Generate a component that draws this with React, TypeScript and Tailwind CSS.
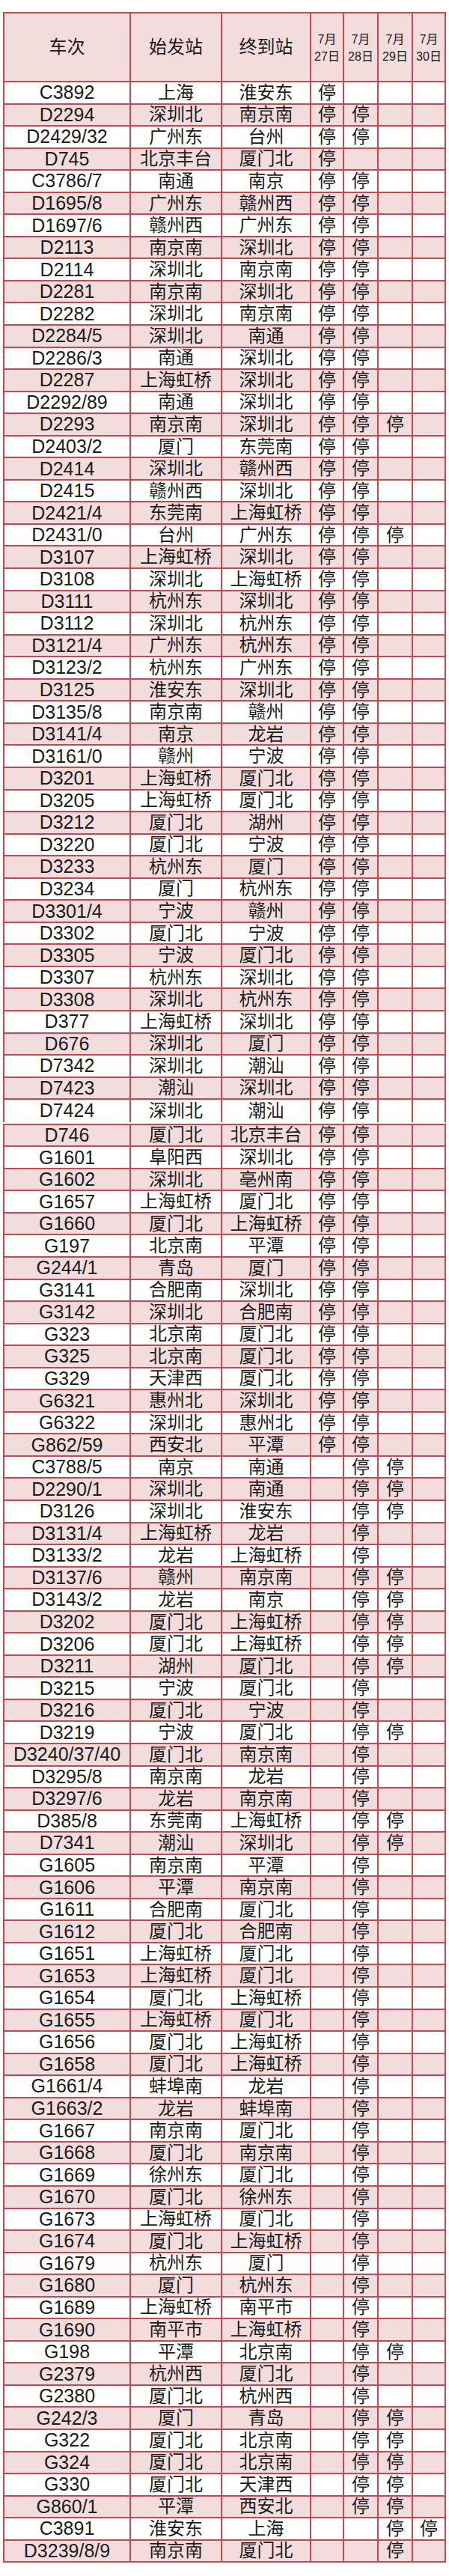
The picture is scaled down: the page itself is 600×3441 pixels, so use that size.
import React from 'react';

// train | from | to | stops on 7/27, 7/28, 7/29, 7/30
const partOne = [
  'C3892|上海|淮安东|1000',
  'D2294|深圳北|南京南|1100',
  'D2429/32|广州东|台州|1100',
  'D745|北京丰台|厦门北|1000',
  'C3786/7|南通|南京|1100',
  'D1695/8|广州东|赣州西|1100',
  'D1697/6|赣州西|广州东|1100',
  'D2113|南京南|深圳北|1100',
  'D2114|深圳北|南京南|1100',
  'D2281|南京南|深圳北|1100',
  'D2282|深圳北|南京南|1100',
  'D2284/5|深圳北|南通|1100',
  'D2286/3|南通|深圳北|1100',
  'D2287|上海虹桥|深圳北|1100',
  'D2292/89|南通|深圳北|1100',
  'D2293|南京南|深圳北|1110',
  'D2403/2|厦门|东莞南|1100',
  'D2414|深圳北|赣州西|1100',
  'D2415|赣州西|深圳北|1100',
  'D2421/4|东莞南|上海虹桥|1100',
  'D2431/0|台州|广州东|1110',
  'D3107|上海虹桥|深圳北|1100',
  'D3108|深圳北|上海虹桥|1100',
  'D3111|杭州东|深圳北|1100',
  'D3112|深圳北|杭州东|1100',
  'D3121/4|广州东|杭州东|1100',
  'D3123/2|杭州东|广州东|1100',
  'D3125|淮安东|深圳北|1100',
  'D3135/8|南京南|赣州|1100',
  'D3141/4|南京|龙岩|1100',
  'D3161/0|赣州|宁波|1100',
  'D3201|上海虹桥|厦门北|1100',
  'D3205|上海虹桥|厦门北|1100',
  'D3212|厦门北|湖州|1100',
  'D3220|厦门北|宁波|1100',
  'D3233|杭州东|厦门|1100',
  'D3234|厦门|杭州东|1100',
  'D3301/4|宁波|赣州|1100',
  'D3302|厦门北|宁波|1100',
  'D3305|宁波|厦门北|1100',
  'D3307|杭州东|深圳北|1100',
  'D3308|深圳北|杭州东|1100',
  'D377|上海虹桥|深圳北|1100',
  'D676|深圳北|厦门|1100',
  'D7342|深圳北|潮汕|1100',
  'D7423|潮汕|深圳北|1100',
  'D7424|深圳北|潮汕|1100',
];

const partTwo = [
  'D746|厦门北|北京丰台|1100',
  'G1601|阜阳西|深圳北|1100',
  'G1602|深圳北|亳州南|1100',
  'G1657|上海虹桥|厦门北|1100',
  'G1660|厦门北|上海虹桥|1100',
  'G197|北京南|平潭|1100',
  'G244/1|青岛|厦门|1100',
  'G3141|合肥南|深圳北|1100',
  'G3142|深圳北|合肥南|1100',
  'G323|北京南|厦门北|1100',
  'G325|北京南|厦门北|1100',
  'G329|天津西|厦门北|1100',
  'G6321|惠州北|深圳北|1100',
  'G6322|深圳北|惠州北|1100',
  'G862/59|西安北|平潭|1100',
  'C3788/5|南京|南通|0110',
  'D2290/1|深圳北|南通|0110',
  'D3126|深圳北|淮安东|0110',
  'D3131/4|上海虹桥|龙岩|0100',
  'D3133/2|龙岩|上海虹桥|0100',
  'D3137/6|赣州|南京南|0110',
  'D3143/2|龙岩|南京|0110',
  'D3202|厦门北|上海虹桥|0110',
  'D3206|厦门北|上海虹桥|0110',
  'D3211|湖州|厦门北|0110',
  'D3215|宁波|厦门北|0100',
  'D3216|厦门北|宁波|0100',
  'D3219|宁波|厦门北|0110',
  'D3240/37/40|厦门北|南京南|0100',
  'D3295/8|南京南|龙岩|0100',
  'D3297/6|龙岩|南京南|0100',
  'D385/8|东莞南|上海虹桥|0110',
  'D7341|潮汕|深圳北|0110',
  'G1605|南京南|平潭|0100',
  'G1606|平潭|南京南|0100',
  'G1611|合肥南|厦门北|0100',
  'G1612|厦门北|合肥南|0100',
  'G1651|上海虹桥|厦门北|0100',
  'G1653|上海虹桥|厦门北|0100',
  'G1654|厦门北|上海虹桥|0100',
  'G1655|上海虹桥|厦门北|0100',
  'G1656|厦门北|上海虹桥|0100',
  'G1658|厦门北|上海虹桥|0100',
  'G1661/4|蚌埠南|龙岩|0100',
  'G1663/2|龙岩|蚌埠南|0100',
  'G1667|南京南|厦门北|0100',
  'G1668|厦门北|南京南|0100',
  'G1669|徐州东|厦门北|0100',
  'G1670|厦门北|徐州东|0100',
  'G1673|上海虹桥|厦门北|0100',
  'G1674|厦门北|上海虹桥|0100',
  'G1679|杭州东|厦门|0100',
  'G1680|厦门|杭州东|0100',
  'G1689|上海虹桥|南平市|0100',
  'G1690|南平市|上海虹桥|0100',
  'G198|平潭|北京南|0110',
  'G2379|杭州西|厦门北|0100',
  'G2380|厦门北|杭州西|0100',
  'G242/3|厦门|青岛|0110',
  'G322|厦门北|北京南|0110',
  'G324|厦门北|北京南|0110',
  'G330|厦门北|天津西|0110',
  'G860/1|平潭|西安北|0110',
  'C3891|淮安东|上海|0011',
  'D3239/8/9|南京南|厦门北|0010',
];

const grid = 'grid grid-cols-[169px_122px_119px_44px_46px_46px_42px]';
const cell = 'flex items-center justify-center border-r-2 border-[#c9484e]';
const lastCell = 'flex items-center justify-center';

function Row({ line, index, last }: { line: string; index: number; last?: boolean }) {
  const [train, from, to, stops] = line.split('|');
  const pink = index % 2 === 1;
  return (
    <div
      className={`${grid} h-[29.55px] ${last ? '' : 'border-b-2'} border-[#c9484e] ${
        pink ? 'bg-[#f3dcdc]' : 'bg-white'
      }`}
    >
      <div className={`${cell} text-[25px]`}>{train}</div>
      <div className={cell}>{from}</div>
      <div className={cell}>{to}</div>
      {stops.split('').map((s, i) => (
        <div key={i} className={i === 3 ? lastCell : cell}>
          {s === '1' ? '停' : ''}
        </div>
      ))}
    </div>
  );
}

const dates = ['27日', '28日', '29日', '30日'];

export default function App() {
  return (
    <div
      className="w-[600px] h-[3441px] bg-white pt-[16px] pl-[4px] text-[24px] leading-none text-[#1b1b1b]"
      style={{ fontFamily: '"Liberation Sans", "Noto Sans CJK SC", sans-serif' }}
    >
      <div className="w-[592px] border-x-2 border-t-2 border-[#c9484e]">
        <div className={`${grid} h-[92px] border-b-2 border-[#c9484e] bg-[#f3dcdc]`}>
          <div className={cell}>车次</div>
          <div className={cell}>始发站</div>
          <div className={cell}>终到站</div>
          {dates.map((d, i) => (
            <div
              key={d}
              className={`${i === 3 ? lastCell : cell} flex-col text-[16px] leading-[23px] pt-[2px]`}
            >
              <span>7月</span>
              <span>{d}</span>
            </div>
          ))}
        </div>
        {partOne.map((line, i) => (
          <Row key={line} line={line} index={i} last={i === partOne.length - 1} />
        ))}
      </div>
      <div className="h-[2px]" />
      <div className="w-[592px] border-x-2 border-t-2 border-[#c9484e]">
        {partTwo.map((line, i) => (
          <Row key={line} line={line} index={partOne.length + i} />
        ))}
      </div>
    </div>
  );
}
